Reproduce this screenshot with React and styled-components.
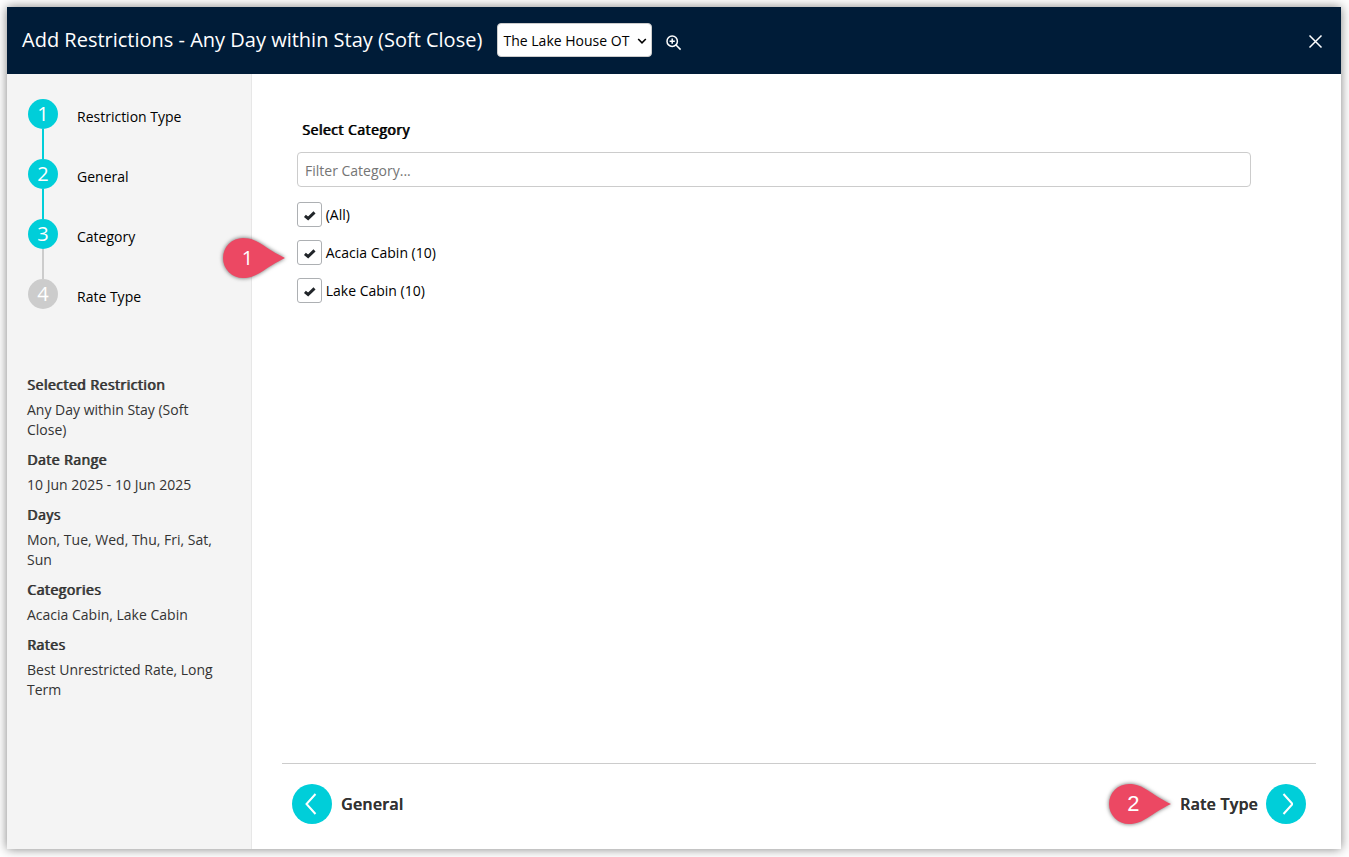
import React from 'react';
import styled, { createGlobalStyle } from 'styled-components';

const GlobalStyle = createGlobalStyle`
*, *::before, *::after {
  box-sizing: border-box;
}

body {
  margin: 0;
  background: #fff;
  color: #000;
  font: 14px/20px 'Open Sans', sans-serif;
}

h4, p, ol, ul {
  margin: 0;
  padding: 0;
  list-style: none;
}

button, input {
  font: inherit;
}
`;

const Page = styled.div`
height: 857px;
padding: 7px 8px 8px 7px;
overflow: hidden;
`;

const Modal = styled.section`
display: flex;
flex-direction: column;
height: 842px;
background: #fff;
box-shadow: 0 0 10px rgba(0, 0, 0, .5);
`;

const Header = styled.header`
display: flex;
align-items: center;
flex: none;
height: 67px;
padding: 0 17px 0 15px;
background: #001c38;
color: #fff;
`;

const Title = styled.span`
width: 475px;
font-size: 20px;
line-height: 28px;
padding-bottom: 2px;
white-space: nowrap;
`;

const PropertySelect = styled.button`
display: flex;
align-items: center;
justify-content: space-between;
width: 155px;
height: 34px;
margin: 0 14px 1px 0;
padding: 1px 4px 0 5.5px;
border: 1px solid #ccc;
border-radius: 4px;
background: #fff;
color: #000;
white-space: nowrap;
`;

const IconButton = styled.button`
display: flex;
margin: ${({ $end }) => ($end ? '1px 0 0 auto' : '4px 0 0')};
padding: 0;
border: 0;
background: none;
color: #fff;
`;

const Body = styled.div`
display: flex;
flex: 1;
min-height: 0;
`;

const Sidebar = styled.aside`
flex: none;
width: 245px;
padding: 25px 20px 0;
border-right: 1px solid #e7e7e7;
background: #f4f4f4;
`;

const Step = styled.li`
display: flex;
height: 60px;
`;

const StepMarker = styled.div`
display: flex;
flex-direction: column;
align-items: center;
width: 30px;
margin: 0 19px 0 1px;
`;

const StepNumber = styled.span`
flex: none;
width: 30px;
height: 30px;
border-radius: 50%;
background: ${({ $done }) => ($done ? '#00ced9' : '#ccc')};
color: #fff;
font-size: 20px;
line-height: 30px;
text-align: center;
`;

const StepLine = styled.span`
flex: 1;
width: 2px;
background: ${({ $done }) => ($done ? '#00ced9' : '#ccc')};
`;

const StepLabel = styled.span`
padding-top: 8px;
`;

const Summary = styled.div`
margin-top: 36px;
color: #333;
`;

const SummaryTitle = styled.h4`
margin-bottom: 5px;
font-size: 14px;
font-weight: 400;
letter-spacing: .48px;
text-shadow: .9px 0 0 currentColor;
`;

const SummaryText = styled.p`
margin-bottom: 10px;
`;

const Content = styled.main`
display: flex;
flex-direction: column;
flex: 1;
padding: 46px 25px 0 30px;
`;

const Panel = styled.div`
flex: 1;
width: 969px;
padding-left: 15px;
`;

const PanelTitle = styled.h4`
margin: 0 0 12px 5px;
font-size: 14px;
font-weight: 400;
letter-spacing: .48px;
text-shadow: .9px 0 0 currentColor;
`;

const Filter = styled.input`
display: block;
width: 100%;
height: 35px;
margin-bottom: 15px;
padding: 2px 7px 0;
border: 1px solid #ccc;
border-radius: 4px;
outline: 0;

&::placeholder {
  color: #757575;
}
`;

const Option = styled.li`
display: flex;
align-items: center;
position: relative;
width: 160px;
height: 25px;
margin-bottom: 13px;
`;

const Check = styled.span`
display: flex;
align-items: center;
justify-content: center;
width: 25px;
height: 25px;
margin-right: 3.7px;
padding: 2px 0 0;
border: 1px solid #adb0b3;
border-radius: 3px;
`;

const Footer = styled.footer`
display: flex;
justify-content: space-between;
height: 86px;
padding: 20px 10px 0;
border-top: 1px solid #ccc;
`;

const NavItem = styled.div`
display: flex;
align-items: center;
position: relative;
gap: ${({ $next }) => ($next ? '8px' : '9px')};
height: 40px;
color: #333;
font-size: 16px;
font-weight: 600;
letter-spacing: .22px;
text-shadow: .3px 0 0 currentColor;
`;

const NavButton = styled.button`
display: flex;
align-items: center;
justify-content: center;
width: 40px;
height: 40px;
padding: 0;
border: 0;
border-radius: 50%;
background: #00ced9;
color: #fff;
`;

// pins float over the page, left of the element they point at
const Pin = styled.span`
position: absolute;
top: ${({ $top }) => $top}px;
left: ${({ $left }) => $left}px;
width: 64px;
height: 42px;
color: #fff;
font: ${({ $font }) => $font};
text-shadow: none;

svg {
  position: absolute;
  top: 0;
  left: 0;
  overflow: visible;
  filter: drop-shadow(0 0 2px rgba(0, 0, 0, .6));
}

b {
  position: relative;
  display: block;
  width: 51px;
  font-weight: 400;
  text-align: center;
}
`;

const Callout = ({ children, ...props }) => (
  <Pin {...props}>
    <svg width="64" height="42" viewBox="0 0 64 42">
      <path d="M21 1A20 20 0 1 0 21 41C36 41 42 31 63 21C42 11 36 1 21 1Z" fill="#ec4863" />
    </svg>
    <b>{children}</b>
  </Pin>
);

const CheckIcon = () => (
  <svg width="13" height="11" viewBox="0 0 13 11">
    <path d="M1.9 5.9L5.1 8.5L11.5 2.4" fill="none" stroke="#212529" strokeWidth="3" />
  </svg>
);

const steps = ['Restriction Type', 'General', 'Category', 'Rate Type'];
const current = 3;

const summary = [
  ['Selected Restriction', 'Any Day within Stay (Soft Close)'],
  ['Date Range', '10 Jun 2025 - 10 Jun 2025'],
  ['Days', 'Mon, Tue, Wed, Thu, Fri, Sat, Sun'],
  ['Categories', 'Acacia Cabin, Lake Cabin'],
  ['Rates', 'Best Unrestricted Rate, Long Term'],
];

const options = ['(All)', 'Acacia Cabin (10)', 'Lake Cabin (10)'];

const App = () => (
  <>
    <GlobalStyle />
    <Page>
      <Modal>
        <Header>
          <Title>Add Restrictions - Any Day within Stay (Soft Close)</Title>
          <PropertySelect>
            The Lake House OT
            <svg width="10" height="8" viewBox="0 0 10 8" fill="none" stroke="#000" strokeWidth="1.6">
              <path d="M1.2 2L5 5.8L8.8 2" />
            </svg>
          </PropertySelect>
          <IconButton aria-label="Search">
            <svg width="16" height="16" viewBox="0 0 16 16" fill="none" stroke="#fff" strokeWidth="1.5">
              <circle cx="6.2" cy="6.2" r="5.2" />
              <path d="M10 10L14.6 14.6M6.2 3.6V8.8M3.6 6.2H8.8" />
            </svg>
          </IconButton>
          <IconButton $end aria-label="Close">
            <svg width="16" height="16" viewBox="0 0 16 16" fill="none" stroke="#fff" strokeWidth="1.5">
              <path d="M1.5 2.5L13.5 14.5M13.5 2.5L1.5 14.5" />
            </svg>
          </IconButton>
        </Header>
        <Body>
          <Sidebar>
            <ol>
              {steps.map((label, i) => (
                <Step key={label}>
                  <StepMarker>
                    <StepNumber $done={i < current}>{i + 1}</StepNumber>
                    {i < steps.length - 1 && <StepLine $done={i + 1 < current} />}
                  </StepMarker>
                  <StepLabel>{label}</StepLabel>
                </Step>
              ))}
            </ol>
            <Summary>
              {summary.map(([title, text]) => (
                <React.Fragment key={title}>
                  <SummaryTitle>{title}</SummaryTitle>
                  <SummaryText>{text}</SummaryText>
                </React.Fragment>
              ))}
            </Summary>
          </Sidebar>
          <Content>
            <Panel>
              <PanelTitle>Select Category</PanelTitle>
              <Filter placeholder="Filter Category..." />
              <ul>
                {options.map((label, i) => (
                  <Option key={label}>
                    <Check><CheckIcon /></Check>
                    {label}
                    {i === 1 && <Callout $top={-3} $left={-75} $font="20px/42px 'Open Sans', sans-serif">1</Callout>}
                  </Option>
                ))}
              </ul>
            </Panel>
            <Footer>
              <NavItem>
                <NavButton aria-label="Previous">
                  <svg width="14" height="24" viewBox="0 0 14 24" fill="none" stroke="#fff" strokeWidth="2">
                    <path d="M10.5 2L1.5 12L10.5 22" />
                  </svg>
                </NavButton>
                General
              </NavItem>
              <NavItem $next>
                Rate Type
                <NavButton aria-label="Next">
                  <svg width="14" height="24" viewBox="0 0 14 24" fill="none" stroke="#fff" strokeWidth="2">
                    <path d="M4.5 2L13.5 12L4.5 22" />
                  </svg>
                </NavButton>
                <Callout $top={-1} $left={-72} $font="22px/42px 'Liberation Sans', sans-serif">2</Callout>
              </NavItem>
            </Footer>
          </Content>
        </Body>
      </Modal>
    </Page>
  </>
);

export default App;
